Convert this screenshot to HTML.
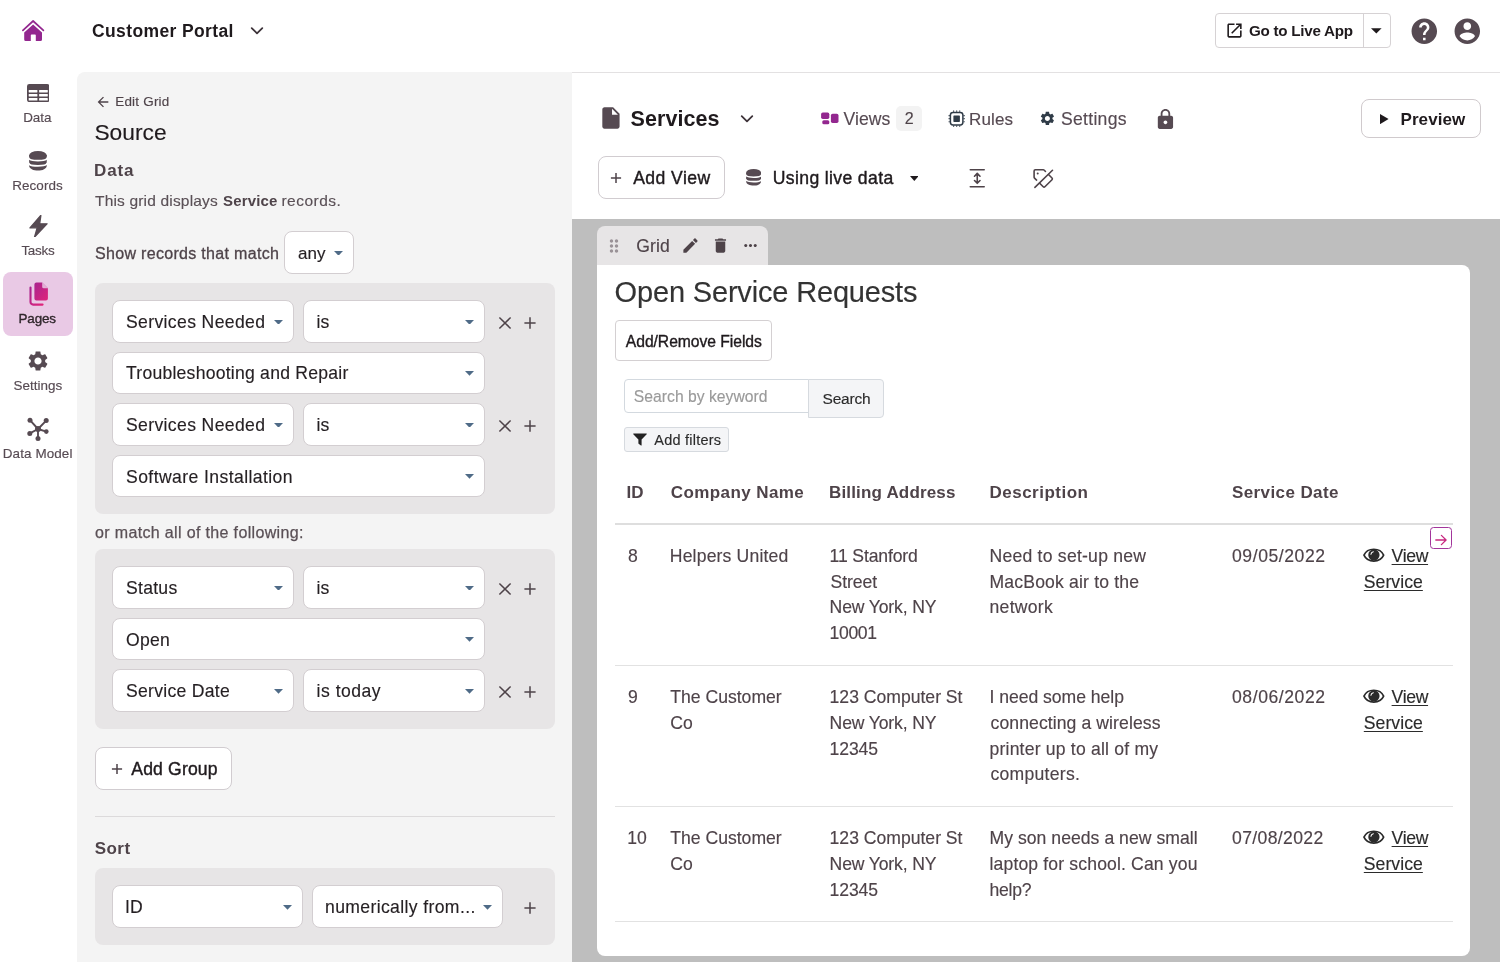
<!DOCTYPE html>
<html lang="en"><head><meta charset="utf-8"><title>Customer Portal - Services</title>
<style>
html,body{margin:0;padding:0}
body{width:1500px;height:962px;overflow:hidden;background:#fff;position:relative;font-family:"Liberation Sans", sans-serif;}
.b{position:absolute;box-sizing:border-box;display:block}
.t{position:absolute;white-space:pre;margin:0;padding:0}
#tx{position:absolute;left:0;top:0;width:1500px;height:962px;will-change:transform}
</style></head><body>
<div class="b" style="left:77px;top:72px;width:495px;height:890px;background:#f4f4f4;border-radius:8px 0 0 0;"></div>
<div class="b" style="left:572px;top:72px;width:928px;height:147px;background:#fff;border-top:1px solid #e3e1e2;"></div>
<div class="b" style="left:572px;top:218.5px;width:928px;height:743.5px;background:#bebebe;"></div>
<div class="b" style="left:596.6px;top:226.3px;width:171.8px;height:40px;background:#e7e5e6;border-radius:8px 8px 0 0;"></div>
<div class="b" style="left:597px;top:265px;width:872.6px;height:690.6px;background:#fff;border-radius:0 8px 8px 8px;"></div>
<div class="b" style="left:3px;top:272px;width:70px;height:63.6px;background:#e9c9e5;border-radius:8px;"></div>
<svg class="b" style="left:21px;top:19px;" width="24" height="24" viewBox="0 0 24 24"><path d="M1.900 11.400 L12.100 2 L22.400 11.400" fill="none" stroke="#93278f" stroke-width="1.700" stroke-linecap="round" stroke-linejoin="round"/><path d="M12.100 5.500 L21 13.500 V20.400 a1.500 1.500 0 0 1 -1.500 1.500 H14.800 V16.200 a0.800 0.800 0 0 0 -0.800 -0.800 H10.600 a0.800 0.800 0 0 0 -0.800 0.800 V21.900 H4.700 a1.500 1.500 0 0 1 -1.500 -1.500 V13.500 Z" fill="#93278f"/></svg>
<svg class="b" style="left:248.5px;top:23px;" width="16" height="16" viewBox="0 0 16 16"><path d="M2.700 5.100 L8 10.300 L13.300 5.100" fill="none" stroke="#3d3339" stroke-width="1.800" stroke-linecap="round" stroke-linejoin="round"/></svg>
<div class="b" style="left:1215px;top:13.3px;width:175.7px;height:34.4px;background:#fff;border:1px solid #d6d2d4;border-radius:4px;"></div>
<div class="b" style="left:1363px;top:14px;width:1px;height:33px;background:#d6d2d4;"></div>
<svg class="b" style="left:1225px;top:21px;" width="19" height="19" viewBox="0 0 24 24"><path fill="#1f1a1d" d="M19 19H5V5h7V3H5c-1.11 0-2 .9-2 2v14c0 1.1.89 2 2 2h14c1.1 0 2-.9 2-2v-7h-2v7zM14 3v2h3.59l-9.83 9.83 1.41 1.41L19 6.41V10h2V3h-7z"/></svg>
<svg class="b" style="left:1371px;top:28px;" width="10.6" height="5.6" viewBox="0 0 10 5"><path d="M0 0h10L5 5z" fill="#1f1a1d"/></svg>
<svg class="b" style="left:1408.5px;top:15.5px;" width="30.6" height="30.6" viewBox="0 0 24 24"><path fill="#564a52" d="M12 2C6.48 2 2 6.48 2 12s4.48 10 10 10 10-4.48 10-10S17.52 2 12 2zm1 17h-2v-2h2v2zm2.07-7.75l-.9.92C13.45 12.9 13 13.5 13 15h-2v-.5c0-1.1.45-2.1 1.17-2.83l1.24-1.26c.37-.36.59-.86.59-1.41 0-1.1-.9-2-2-2s-2 .9-2 2H8c0-2.21 1.79-4 4-4s4 1.79 4 4c0 .88-.36 1.68-.93 2.25z"/></svg>
<svg class="b" style="left:1451.9px;top:15.5px;" width="30.6" height="30.6" viewBox="0 0 24 24"><path fill="#564a52" d="M12 2C6.48 2 2 6.48 2 12s4.48 10 10 10 10-4.48 10-10S17.52 2 12 2zm0 3c1.66 0 3 1.34 3 3s-1.34 3-3 3-3-1.34-3-3 1.34-3 3-3zm0 14.2c-2.5 0-4.71-1.28-6-3.22.03-1.99 4-3.08 6-3.08 1.99 0 5.97 1.09 6 3.08-1.29 1.94-3.5 3.22-6 3.22z"/></svg>
<svg class="b" style="left:26.8px;top:84.1px;" width="22.5" height="18.1" viewBox="0 0 22.5 18.1"><rect x="0" y="0" width="22.5" height="18.1" rx="2.3" fill="#564a52"/><rect x="1.7" y="5.9" width="8.7" height="2.6" rx="0.4" fill="#fff"/><rect x="1.7" y="9.9" width="8.7" height="2.6" rx="0.4" fill="#fff"/><rect x="1.7" y="14.0" width="8.7" height="2.6" rx="0.4" fill="#fff"/><rect x="12.1" y="5.9" width="8.7" height="2.6" rx="0.4" fill="#fff"/><rect x="12.1" y="9.9" width="8.7" height="2.6" rx="0.4" fill="#fff"/><rect x="12.1" y="14.0" width="8.7" height="2.6" rx="0.4" fill="#fff"/></svg>
<svg class="b" style="left:29.1px;top:150.8px;" width="17.9" height="19.8" viewBox="0 0 18 20"><path d="M0.100 4.400 V14.600 C0.100 21.500 17.900 21.500 17.900 14.600 V4.400 Z" fill="#564a52"/><ellipse cx="9" cy="4.400" rx="8.900" ry="4.350" fill="#564a52"/><path d="M-0.500 6.600 C-0.500 10.800 18.500 10.800 18.500 6.600" fill="none" stroke="#fff" stroke-width="1.700"/><path d="M-0.500 11.800 C-0.500 16.100 18.500 16.100 18.500 11.800" fill="none" stroke="#fff" stroke-width="1.900"/></svg>
<svg class="b" style="left:28.5px;top:214.5px;" width="19" height="22.5" viewBox="0 0 19 22"><path d="M11.8 0.3 L1 12.6 H8.2 L5.6 21.7 L18 8.6 H10.6 Z" fill="#564a52" stroke="#564a52" stroke-width="1.400" stroke-linejoin="round"/></svg>
<svg class="b" style="left:28.5px;top:281.5px;" width="19.5" height="24" viewBox="0 0 19.5 24"><defs><linearGradient id="pg" x1="0" y1="0" x2="1" y2="1"><stop offset="0" stop-color="#a8248f"/><stop offset="1" stop-color="#e0257b"/></linearGradient></defs><path d="M7.4 0.6 H13.2 L18.9 6.3 V16.6 a2 2 0 0 1 -2 2 H7.4 a2 2 0 0 1 -2 -2 V2.6 a2 2 0 0 1 2 -2 Z" fill="url(#pg)"/><path d="M13.2 0.6 V4.8 a1.5 1.5 0 0 0 1.5 1.5 H18.9 Z" fill="#e9c9e5" opacity="0.85"/><path d="M1.5 5.6 V20 a2.6 2.6 0 0 0 2.6 2.6 H13.6" fill="none" stroke="url(#pg)" stroke-width="2.1" stroke-linecap="round"/></svg>
<svg class="b" style="left:26px;top:349.2px;" width="24" height="24" viewBox="0 0 24 24"><path fill="#564a52" d="M19.14 12.94c.04-.3.06-.61.06-.94 0-.32-.02-.64-.07-.94l2.03-1.58c.18-.14.23-.41.12-.61l-1.92-3.32c-.12-.22-.37-.29-.59-.22l-2.39.96c-.5-.38-1.03-.7-1.62-.94l-.36-2.54c-.04-.24-.24-.41-.48-.41h-3.84c-.24 0-.43.17-.47.41l-.36 2.54c-.59.24-1.13.57-1.62.94l-2.39-.96c-.22-.08-.47 0-.59.22L2.74 8.87c-.12.21-.08.47.12.61l2.03 1.58c-.05.3-.09.63-.09.94s.02.64.07.94l-2.03 1.58c-.18.14-.23.41-.12.61l1.92 3.32c.12.22.37.29.59.22l2.39-.96c.5.38 1.03.7 1.62.94l.36 2.54c.05.24.24.41.48.41h3.84c.24 0 .44-.17.47-.41l.36-2.54c.59-.24 1.13-.56 1.62-.94l2.39.96c.22.08.47 0 .59-.22l1.92-3.32c.12-.22.07-.47-.12-.61l-2.01-1.58zM12 15.6c-1.98 0-3.6-1.62-3.6-3.6s1.62-3.6 3.6-3.6 3.6 1.62 3.6 3.6-1.62 3.6-3.6 3.6z"/></svg>
<svg class="b" style="left:26.5px;top:417px;" width="22" height="24.5" viewBox="0 0 22 24.5"><g stroke="#564a52" stroke-width="1.9" stroke-linecap="round"><path d="M11 12 L3 3.2 M11 12 L19.2 3.6 M11 12 L2.8 16.4 M11 12 L19.3 14.6 M11 12 V21.6"/></g><g fill="#564a52"><circle cx="11" cy="12" r="3"/><circle cx="3" cy="3.2" r="2.5"/><circle cx="19.2" cy="3.6" r="2.5"/><circle cx="2.8" cy="16.4" r="2.5"/><circle cx="19.3" cy="14.6" r="2.3"/><circle cx="11" cy="21.6" r="2.5"/></g></svg>
<svg class="b" style="left:94.6px;top:94px;" width="16" height="16" viewBox="0 0 24 24"><path fill="#4e4349" d="M20 11H7.83l5.59-5.59L12 4l-8 8 8 8 1.41-1.41L7.83 13H20v-2z"/></svg>
<div class="b" style="left:283.6px;top:231.1px;width:70.6px;height:42.9px;background:#fff;border:1px solid #d3ced1;border-radius:8px;"></div>
<svg class="b" style="left:333.6px;top:250.74999999999997px;" width="9" height="4.7" viewBox="0 0 9 4.7"><path d="M0 0 H9 L4.5 4.7 Z" fill="#4f6b87"/></svg>
<div class="b" style="left:95px;top:283px;width:460px;height:231px;background:#e7e5e6;border-radius:8px;"></div>
<div class="b" style="left:111.9px;top:300.0px;width:182.4px;height:42.7px;background:#fff;border:1px solid #d3ced1;border-radius:8px;"></div>
<svg class="b" style="left:273.7px;top:319.55px;" width="9" height="4.7" viewBox="0 0 9 4.7"><path d="M0 0 H9 L4.5 4.7 Z" fill="#4f6b87"/></svg>
<div class="b" style="left:302.7px;top:300.0px;width:182.5px;height:42.7px;background:#fff;border:1px solid #d3ced1;border-radius:8px;"></div>
<svg class="b" style="left:464.59999999999997px;top:319.55px;" width="9" height="4.7" viewBox="0 0 9 4.7"><path d="M0 0 H9 L4.5 4.7 Z" fill="#4f6b87"/></svg>
<svg class="b" style="left:497.5px;top:315.8px;" width="14" height="14" viewBox="0 0 14 14"><path d="M1.400 1.500 L12.600 12.500 M12.600 1.500 L1.400 12.500" stroke="#4e4349" stroke-width="1.5" fill="none"/></svg>
<svg class="b" style="left:523.2px;top:315.8px;" width="14" height="14" viewBox="0 0 14 14"><path d="M7 1.300 V12.700 M1.400 7 H12.600" stroke="#4e4349" stroke-width="1.5" fill="none"/></svg>
<div class="b" style="left:111.9px;top:351.6px;width:373.3px;height:42.7px;background:#fff;border:1px solid #d3ced1;border-radius:8px;"></div>
<svg class="b" style="left:464.6px;top:371.15000000000003px;" width="9" height="4.7" viewBox="0 0 9 4.7"><path d="M0 0 H9 L4.5 4.7 Z" fill="#4f6b87"/></svg>
<div class="b" style="left:111.9px;top:403.2px;width:182.4px;height:42.7px;background:#fff;border:1px solid #d3ced1;border-radius:8px;"></div>
<svg class="b" style="left:273.7px;top:422.75px;" width="9" height="4.7" viewBox="0 0 9 4.7"><path d="M0 0 H9 L4.5 4.7 Z" fill="#4f6b87"/></svg>
<div class="b" style="left:302.7px;top:403.2px;width:182.5px;height:42.7px;background:#fff;border:1px solid #d3ced1;border-radius:8px;"></div>
<svg class="b" style="left:464.59999999999997px;top:422.75px;" width="9" height="4.7" viewBox="0 0 9 4.7"><path d="M0 0 H9 L4.5 4.7 Z" fill="#4f6b87"/></svg>
<svg class="b" style="left:497.5px;top:419.0px;" width="14" height="14" viewBox="0 0 14 14"><path d="M1.400 1.500 L12.600 12.500 M12.600 1.500 L1.400 12.500" stroke="#4e4349" stroke-width="1.5" fill="none"/></svg>
<svg class="b" style="left:523.2px;top:419.0px;" width="14" height="14" viewBox="0 0 14 14"><path d="M7 1.300 V12.700 M1.400 7 H12.600" stroke="#4e4349" stroke-width="1.5" fill="none"/></svg>
<div class="b" style="left:111.9px;top:454.8px;width:373.3px;height:42.7px;background:#fff;border:1px solid #d3ced1;border-radius:8px;"></div>
<svg class="b" style="left:464.6px;top:474.35px;" width="9" height="4.7" viewBox="0 0 9 4.7"><path d="M0 0 H9 L4.5 4.7 Z" fill="#4f6b87"/></svg>
<div class="b" style="left:95px;top:549.3px;width:460px;height:180px;background:#e7e5e6;border-radius:8px;"></div>
<div class="b" style="left:111.9px;top:566.2px;width:182.4px;height:42.7px;background:#fff;border:1px solid #d3ced1;border-radius:8px;"></div>
<svg class="b" style="left:273.7px;top:585.7500000000001px;" width="9" height="4.7" viewBox="0 0 9 4.7"><path d="M0 0 H9 L4.5 4.7 Z" fill="#4f6b87"/></svg>
<div class="b" style="left:302.7px;top:566.2px;width:182.5px;height:42.7px;background:#fff;border:1px solid #d3ced1;border-radius:8px;"></div>
<svg class="b" style="left:464.59999999999997px;top:585.7500000000001px;" width="9" height="4.7" viewBox="0 0 9 4.7"><path d="M0 0 H9 L4.5 4.7 Z" fill="#4f6b87"/></svg>
<svg class="b" style="left:497.5px;top:582.0px;" width="14" height="14" viewBox="0 0 14 14"><path d="M1.400 1.500 L12.600 12.500 M12.600 1.500 L1.400 12.500" stroke="#4e4349" stroke-width="1.5" fill="none"/></svg>
<svg class="b" style="left:523.2px;top:582.0px;" width="14" height="14" viewBox="0 0 14 14"><path d="M7 1.300 V12.700 M1.400 7 H12.600" stroke="#4e4349" stroke-width="1.5" fill="none"/></svg>
<div class="b" style="left:111.9px;top:617.8px;width:373.3px;height:42.7px;background:#fff;border:1px solid #d3ced1;border-radius:8px;"></div>
<svg class="b" style="left:464.6px;top:637.35px;" width="9" height="4.7" viewBox="0 0 9 4.7"><path d="M0 0 H9 L4.5 4.7 Z" fill="#4f6b87"/></svg>
<div class="b" style="left:111.9px;top:669.4px;width:182.4px;height:42.7px;background:#fff;border:1px solid #d3ced1;border-radius:8px;"></div>
<svg class="b" style="left:273.7px;top:688.95px;" width="9" height="4.7" viewBox="0 0 9 4.7"><path d="M0 0 H9 L4.5 4.7 Z" fill="#4f6b87"/></svg>
<div class="b" style="left:302.7px;top:669.4px;width:182.5px;height:42.7px;background:#fff;border:1px solid #d3ced1;border-radius:8px;"></div>
<svg class="b" style="left:464.59999999999997px;top:688.95px;" width="9" height="4.7" viewBox="0 0 9 4.7"><path d="M0 0 H9 L4.5 4.7 Z" fill="#4f6b87"/></svg>
<svg class="b" style="left:497.5px;top:685.1999999999999px;" width="14" height="14" viewBox="0 0 14 14"><path d="M1.400 1.500 L12.600 12.500 M12.600 1.500 L1.400 12.500" stroke="#4e4349" stroke-width="1.5" fill="none"/></svg>
<svg class="b" style="left:523.2px;top:685.1999999999999px;" width="14" height="14" viewBox="0 0 14 14"><path d="M7 1.300 V12.700 M1.400 7 H12.600" stroke="#4e4349" stroke-width="1.5" fill="none"/></svg>
<div class="b" style="left:94.5px;top:747.4px;width:137.8px;height:42.6px;background:#fff;border:1px solid #d1ccd0;border-radius:8px;"></div>
<svg class="b" style="left:111.2px;top:762.8px;" width="12" height="12" viewBox="0 0 12 12"><path d="M6 0.900 V11.100 M0.900 6 H11.100" stroke="#4e4349" stroke-width="1.500" fill="none"/></svg>
<div class="b" style="left:94.6px;top:816.3px;width:460.4px;height:1px;background:#dcdadb;"></div>
<div class="b" style="left:95px;top:868.3px;width:460px;height:76.7px;background:#e7e5e6;border-radius:8px;"></div>
<div class="b" style="left:111.9px;top:885.3px;width:191.3px;height:42.7px;background:#fff;border:1px solid #d3ced1;border-radius:8px;"></div>
<svg class="b" style="left:282.6px;top:904.85px;" width="9" height="4.7" viewBox="0 0 9 4.7"><path d="M0 0 H9 L4.5 4.7 Z" fill="#4f6b87"/></svg>
<div class="b" style="left:311.9px;top:885.3px;width:191.3px;height:42.7px;background:#fff;border:1px solid #d3ced1;border-radius:8px;"></div>
<svg class="b" style="left:482.59999999999997px;top:904.85px;" width="9" height="4.7" viewBox="0 0 9 4.7"><path d="M0 0 H9 L4.5 4.7 Z" fill="#4f6b87"/></svg>
<svg class="b" style="left:523.2px;top:901.0999999999999px;" width="14" height="14" viewBox="0 0 14 14"><path d="M7 1.300 V12.700 M1.400 7 H12.600" stroke="#4e4349" stroke-width="1.5" fill="none"/></svg>
<svg class="b" style="left:597.7px;top:105.2px;" width="25.9" height="25.9" viewBox="0 0 24 24"><path fill="#564a52" d="M6 2c-1.1 0-1.99.9-1.99 2L4 20c0 1.1.89 2 1.99 2H18c1.1 0 2-.9 2-2V8l-6-6H6zm7 7V3.5L18.5 9H13z"/></svg>
<svg class="b" style="left:738.5px;top:110.5px;" width="16" height="16" viewBox="0 0 16 16"><path d="M2.700 5.100 L8 10.300 L13.300 5.100" fill="none" stroke="#3d3339" stroke-width="1.800" stroke-linecap="round" stroke-linejoin="round"/></svg>
<svg class="b" style="left:821px;top:112px;" width="18" height="13" viewBox="0 0 18 13"><g fill="#93278f"><rect x="0.100" y="0.600" width="8.200" height="6.300" rx="1.700"/><rect x="1.300" y="8.200" width="7" height="4.100" rx="1.500"/><rect x="9.900" y="1.800" width="7.600" height="9.200" rx="1.700"/></g></svg>
<div class="b" style="left:896px;top:105.6px;width:25.6px;height:25.2px;background:#f3f3f3;border-radius:5px;"></div>
<svg class="b" style="left:947.6px;top:109.7px;" width="17.3" height="17.3" viewBox="0 0 17.3 17.3"><rect x="2.400" y="2.400" width="12.500" height="12.500" rx="2.600" fill="none" stroke="#2f3b47" stroke-width="1.500"/><rect x="5.400" y="5.400" width="6.500" height="6.500" rx="0.700" fill="#2f3b47"/><g stroke="#2f3b47" stroke-width="1.100"><path d="M5.600 0.600V1.800 M8.650 0.600V1.800 M11.700 0.600V1.800 M5.600 15.500V16.700 M8.650 15.500V16.700 M11.700 15.500V16.700 M0.600 5.600H1.800 M0.600 8.650H1.800 M0.600 11.700H1.800 M15.500 5.600H16.700 M15.500 8.650H16.700 M15.500 11.700H16.700"/></g></svg>
<svg class="b" style="left:1038.6px;top:110.4px;" width="16.8" height="16.8" viewBox="0 0 24 24"><path fill="#2f3b47" d="M19.14 12.94c.04-.3.06-.61.06-.94 0-.32-.02-.64-.07-.94l2.03-1.58c.18-.14.23-.41.12-.61l-1.92-3.32c-.12-.22-.37-.29-.59-.22l-2.39.96c-.5-.38-1.03-.7-1.62-.94l-.36-2.54c-.04-.24-.24-.41-.48-.41h-3.84c-.24 0-.43.17-.47.41l-.36 2.54c-.59.24-1.13.57-1.62.94l-2.39-.96c-.22-.08-.47 0-.59.22L2.74 8.87c-.12.21-.08.47.12.61l2.03 1.58c-.05.3-.09.63-.09.94s.02.64.07.94l-2.03 1.58c-.18.14-.23.41-.12.61l1.92 3.32c.12.22.37.29.59.22l2.39-.96c.5.38 1.03.7 1.62.94l.36 2.54c.05.24.24.41.48.41h3.84c.24 0 .44-.17.47-.41l.36-2.54c.59-.24 1.13-.56 1.62-.94l2.39.96c.22.08.47 0 .59-.22l1.92-3.32c.12-.22.07-.47-.12-.61l-2.01-1.58zM12 15.6c-1.98 0-3.6-1.62-3.6-3.6s1.62-3.6 3.6-3.6 3.6 1.62 3.6 3.6-1.62 3.6-3.6 3.6z"/></svg>
<svg class="b" style="left:1154px;top:107.7px;" width="22.9" height="22.9" viewBox="0 0 24 24"><path fill="#564a52" d="M18 8h-1V6c0-2.76-2.24-5-5-5S7 3.240 7 6v2H6c-1.1 0-2 .9-2 2v10c0 1.1.9 2 2 2h12c1.100 0 2-.9 2-2V10c0-1.1-.9-2-2-2zm-6 9c-1.1 0-2-.9-2-2s.9-2 2-2 2 .9 2 2-.9 2-2 2zm3.100-9H8.900V6c0-1.710 1.390-3.100 3.100-3.100 1.710 0 3.100 1.390 3.100 3.100v2z"/></svg>
<div class="b" style="left:1360.8px;top:98.8px;width:120px;height:38.9px;background:#fff;border:1px solid #d0cacd;border-radius:8px;"></div>
<svg class="b" style="left:1380px;top:113.5px;" width="8.6" height="10.2" viewBox="0 0 8.6 10.2"><path d="M0 0 V10.2 L8.6 5.1 Z" fill="#1f1a1d"/></svg>
<div class="b" style="left:598px;top:156.2px;width:127px;height:43px;background:#fff;border:1px solid #d1ccd0;border-radius:8px;"></div>
<svg class="b" style="left:609.6px;top:171.8px;" width="12" height="12" viewBox="0 0 12 12"><path d="M6 0.900 V11.100 M0.900 6 H11.100" stroke="#4e4349" stroke-width="1.500" fill="none"/></svg>
<svg class="b" style="left:746px;top:169.4px;" width="15.2" height="16.8" viewBox="0 0 18 20"><path d="M0.100 4.400 V14.600 C0.100 21.500 17.900 21.500 17.900 14.600 V4.400 Z" fill="#564a52"/><ellipse cx="9" cy="4.400" rx="8.900" ry="4.350" fill="#564a52"/><path d="M-0.500 6.600 C-0.500 10.800 18.500 10.800 18.500 6.600" fill="none" stroke="#fff" stroke-width="1.700"/><path d="M-0.500 11.800 C-0.500 16.100 18.500 16.100 18.500 11.800" fill="none" stroke="#fff" stroke-width="1.900"/></svg>
<svg class="b" style="left:909.8px;top:175.8px;" width="8.6" height="5" viewBox="0 0 8.6 5"><path d="M0 0H8.6L4.3 5z" fill="#1f1a1d"/></svg>
<svg class="b" style="left:968px;top:167.5px;" width="18" height="20" viewBox="0 0 18 20"><g stroke="#4e4349" stroke-width="1.600" fill="none" stroke-linecap="round" stroke-linejoin="round"><path d="M2.300 1.800H16.200 M2.300 18.700H16.200 M9.250 5.800V14.900 M6.500 8.200L9.250 5.400L12 8.200 M6.500 12.500L9.250 15.300L12 12.500"/></g></svg>
<svg class="b" style="left:1031.5px;top:167.5px;" width="22" height="21" viewBox="0 0 22 21"><path d="M3.300 1.800 H11.200 a1.500 1.500 0 0 1 1.060 0.440 L20 10 a1.200 1.200 0 0 1 0 1.700 L12.900 18.800 a1.200 1.200 0 0 1 -1.700 0 L2.540 10.100 a1.500 1.500 0 0 1 -0.440 -1.060 V3 a1.200 1.200 0 0 1 1.200 -1.200 Z" fill="none" stroke="#4e4349" stroke-width="1.600" stroke-linejoin="round"/><circle cx="5.700" cy="5.500" r="1" fill="#4e4349"/><path d="M20.400 -0.400 L0.800 18.700" stroke="#fff" stroke-width="3"/><path d="M20.500 2.300 L2.900 19.400" stroke="#4e4349" stroke-width="1.600" stroke-linecap="round"/></svg>
<svg class="b" style="left:603.5px;top:235.5px;" width="20" height="20" viewBox="0 0 24 24"><path fill="#9a9297" d="M11 18c0 1.1-.9 2-2 2s-2-.9-2-2 .9-2 2-2 2 .9 2 2zm-2-8c-1.1 0-2 .9-2 2s.9 2 2 2 2-.9 2-2-.9-2-2-2zm0-6c-1.1 0-2 .9-2 2s.9 2 2 2 2-.9 2-2-.9-2-2-2zm6 4c1.1 0 2-.9 2-2s-.9-2-2-2-2 .9-2 2 .9 2 2 2zm0 2c-1.1 0-2 .9-2 2s.9 2 2 2 2-.9 2-2-.9-2-2-2zm0 6c-1.1 0-2 .9-2 2s.9 2 2 2 2-.9 2-2-.9-2-2-2z"/></svg>
<svg class="b" style="left:681.2px;top:236.2px;" width="19" height="19" viewBox="0 0 24 24"><path fill="#4e4349" d="M3 17.25V21h3.750L17.810 9.940l-3.750-3.750L3 17.250zM20.710 7.040c.39-.39.39-1.020 0-1.410l-2.340-2.340c-.39-.39-1.020-.39-1.410 0l-1.830 1.830 3.750 3.750 1.830-1.830z"/></svg>
<svg class="b" style="left:711.4px;top:236px;" width="19" height="19" viewBox="0 0 24 24"><path fill="#4e4349" d="M6 19c0 1.100.9 2 2 2h8c1.100 0 2-.9 2-2V7H6v12zM19 4h-3.500l-1-1h-5l-1 1H5v2h14V4z"/></svg>
<svg class="b" style="left:741.4px;top:236px;" width="19" height="19" viewBox="0 0 24 24"><path fill="#4e4349" d="M6 10c-1.100 0-2 .9-2 2s.9 2 2 2 2-.9 2-2-.9-2-2-2zm12 0c-1.100 0-2 .9-2 2s.9 2 2 2 2-.9 2-2-.9-2-2-2zm-6 0c-1.100 0-2 .9-2 2s.9 2 2 2 2-.9 2-2-.9-2-2-2z"/></svg>
<div class="b" style="left:615px;top:320.3px;width:157px;height:40.7px;background:#fff;border:1px solid #d4d0d2;border-radius:4px;"></div>
<div class="b" style="left:624px;top:379px;width:185.3px;height:33.6px;background:#fff;border:1px solid #d3d9df;border-radius:4px 0 0 4px;"></div>
<div class="b" style="left:808.3px;top:379px;width:75.5px;height:38.6px;background:#f4f5f7;border:1px solid #d6dadf;border-radius:0 4px 4px 0;"></div>
<div class="b" style="left:624px;top:427px;width:104.6px;height:24.7px;background:#f4f5f7;border:1px solid #d6dadf;border-radius:3px;"></div>
<svg class="b" style="left:633px;top:433px;" width="14" height="13" viewBox="0 0 14 13"><path d="M0.700 0.400 H13.300 a0.500 0.500 0 0 1 0.400 0.850 L8.600 6.600 V12.200 a0.400 0.400 0 0 1 -0.650 0.300 L5.600 10.700 a0.600 0.600 0 0 1 -0.200 -0.450 V6.600 L0.300 1.250 a0.500 0.500 0 0 1 0.400 -0.850 Z" fill="#222"/></svg>
<div class="b" style="left:615px;top:523px;width:838px;height:2px;background:#dedede;"></div>
<div class="b" style="left:615px;top:664.5px;width:838px;height:1px;background:#e2e2e2;"></div>
<div class="b" style="left:615px;top:805.5px;width:838px;height:1px;background:#e2e2e2;"></div>
<div class="b" style="left:615px;top:921px;width:838px;height:1px;background:#e2e2e2;"></div>
<svg class="b" style="left:1363.2px;top:548px;" width="21.6" height="14.4" viewBox="0 0 21.6 14.4"><path d="M0.950 7.200 C4.500 -0.700 17.100 -0.700 20.650 7.200 C17.100 15.100 4.500 15.100 0.950 7.200 Z" fill="none" stroke="#2b2b2b" stroke-width="1.700" stroke-linejoin="round"/><circle cx="10.900" cy="6.900" r="5.650" fill="#2b2b2b"/><path d="M7.900 6.300 A3.200 3.200 0 0 1 10.300 3.700" fill="none" stroke="#fff" stroke-width="1.050" stroke-linecap="round"/></svg>
<svg class="b" style="left:1363.2px;top:689.2px;" width="21.6" height="14.4" viewBox="0 0 21.6 14.4"><path d="M0.950 7.200 C4.500 -0.700 17.100 -0.700 20.650 7.200 C17.100 15.100 4.500 15.100 0.950 7.200 Z" fill="none" stroke="#2b2b2b" stroke-width="1.700" stroke-linejoin="round"/><circle cx="10.900" cy="6.900" r="5.650" fill="#2b2b2b"/><path d="M7.900 6.300 A3.200 3.200 0 0 1 10.300 3.700" fill="none" stroke="#fff" stroke-width="1.050" stroke-linecap="round"/></svg>
<svg class="b" style="left:1363.2px;top:830.2px;" width="21.6" height="14.4" viewBox="0 0 21.6 14.4"><path d="M0.950 7.200 C4.500 -0.700 17.100 -0.700 20.650 7.200 C17.100 15.100 4.500 15.100 0.950 7.200 Z" fill="none" stroke="#2b2b2b" stroke-width="1.700" stroke-linejoin="round"/><circle cx="10.900" cy="6.900" r="5.650" fill="#2b2b2b"/><path d="M7.900 6.300 A3.200 3.200 0 0 1 10.300 3.700" fill="none" stroke="#fff" stroke-width="1.050" stroke-linecap="round"/></svg>
<div class="b" style="left:1430.3px;top:527px;width:21.9px;height:21.6px;background:#fff;border:1px solid #a2359b;border-radius:3.5px;"></div>
<svg class="b" style="left:1434.3px;top:532.7px;" width="14" height="14" viewBox="0 0 14 14"><path d="M1.800 7 H11.800 M7.400 2.400 L12.100 7 L7.400 11.600" fill="none" stroke="#c7277f" stroke-width="1.300" stroke-linecap="round" stroke-linejoin="round"/></svg>
<div id="tx">
<div class="t" id="t0" style="left:92.00px;top:21.00px;font-size:17.5px;line-height:21px;font-weight:700;color:#1f1a1d;letter-spacing:0.373px;">Customer Portal</div>
<div class="t" id="t1" style="left:1249.00px;top:22.30px;font-size:15.2px;line-height:18px;font-weight:700;color:#1f1a1d;letter-spacing:-0.255px;">Go to Live App</div>
<div class="t" id="t2" style="left:23.20px;top:110.00px;font-size:13.45px;line-height:16px;font-weight:400;color:#564a52;letter-spacing:-0.037px;-webkit-text-stroke:0.15px #564a52;">Data</div>
<div class="t" id="t3" style="left:12.20px;top:178.00px;font-size:13.45px;line-height:16px;font-weight:400;color:#564a52;letter-spacing:0.080px;-webkit-text-stroke:0.15px #564a52;">Records</div>
<div class="t" id="t4" style="left:21.40px;top:243.00px;font-size:13.45px;line-height:16px;font-weight:400;color:#564a52;letter-spacing:-0.257px;-webkit-text-stroke:0.15px #564a52;">Tasks</div>
<div class="t" id="t5" style="left:18.60px;top:311.00px;font-size:13.45px;line-height:16px;font-weight:400;color:#2f262b;letter-spacing:-0.196px;-webkit-text-stroke:0.35px #2f262b;">Pages</div>
<div class="t" id="t6" style="left:13.40px;top:378.00px;font-size:13.45px;line-height:16px;font-weight:400;color:#564a52;letter-spacing:0.052px;-webkit-text-stroke:0.15px #564a52;">Settings</div>
<div class="t" id="t7" style="left:2.80px;top:446.00px;font-size:13.45px;line-height:16px;font-weight:400;color:#564a52;letter-spacing:0.097px;-webkit-text-stroke:0.15px #564a52;">Data Model</div>
<div class="t" id="t8" style="left:115.20px;top:94.00px;font-size:13.45px;line-height:16px;font-weight:400;color:#4e4349;letter-spacing:0.225px;-webkit-text-stroke:0.15px #4e4349;">Edit Grid</div>
<div class="t" id="t9" style="left:94.40px;top:119.00px;font-size:22.77px;line-height:27px;font-weight:400;color:#1f1a1d;letter-spacing:0.026px;-webkit-text-stroke:0.15px #1f1a1d;">Source</div>
<div class="t" id="t10" style="left:94.00px;top:161.00px;font-size:17px;line-height:20px;font-weight:700;color:#4e4349;letter-spacing:0.869px;">Data</div>
<div class="t" id="t11" style="left:95.00px;top:191.00px;font-size:15.52px;line-height:19px;font-weight:400;color:#5a5056;letter-spacing:0.170px;-webkit-text-stroke:0.15px #5a5056;">This grid displays</div>
<div class="t" id="t12" style="left:223.00px;top:192.00px;font-size:15px;line-height:18px;font-weight:700;color:#4e4349;letter-spacing:0.161px;">Service</div>
<div class="t" id="t13" style="left:281.40px;top:191.00px;font-size:15.52px;line-height:19px;font-weight:400;color:#5a5056;letter-spacing:0.495px;-webkit-text-stroke:0.15px #5a5056;">records.</div>
<div class="t" id="t14" style="left:95.00px;top:244.00px;font-size:16.04px;line-height:19px;font-weight:400;color:#4e4349;letter-spacing:0.300px;-webkit-text-stroke:0.3px #4e4349;">Show records that match</div>
<div class="t" id="t15" style="left:297.90px;top:244.00px;font-size:17px;line-height:20px;font-weight:400;color:#241f22;letter-spacing:0.045px;-webkit-text-stroke:0.15px #241f22;">any</div>
<div class="t" id="t16" style="left:126.00px;top:311.70px;font-size:17.59px;line-height:21px;font-weight:400;color:#241f22;letter-spacing:0.365px;-webkit-text-stroke:0.15px #241f22;">Services Needed</div>
<div class="t" id="t17" style="left:316.60px;top:311.70px;font-size:17.59px;line-height:21px;font-weight:400;color:#241f22;-webkit-text-stroke:0.15px #241f22;">is</div>
<div class="t" id="t18" style="left:126.00px;top:363.30px;font-size:17.59px;line-height:21px;font-weight:400;color:#241f22;letter-spacing:0.239px;-webkit-text-stroke:0.15px #241f22;">Troubleshooting and Repair</div>
<div class="t" id="t19" style="left:126.00px;top:414.90px;font-size:17.59px;line-height:21px;font-weight:400;color:#241f22;letter-spacing:0.365px;-webkit-text-stroke:0.15px #241f22;">Services Needed</div>
<div class="t" id="t20" style="left:316.60px;top:414.90px;font-size:17.59px;line-height:21px;font-weight:400;color:#241f22;-webkit-text-stroke:0.15px #241f22;">is</div>
<div class="t" id="t21" style="left:126.00px;top:466.50px;font-size:17.59px;line-height:21px;font-weight:400;color:#241f22;letter-spacing:0.414px;-webkit-text-stroke:0.15px #241f22;">Software Installation</div>
<div class="t" id="t22" style="left:95.00px;top:523.30px;font-size:16px;line-height:19px;font-weight:400;color:#5a5056;letter-spacing:0.349px;-webkit-text-stroke:0.25px #5a5056;">or match all of the following:</div>
<div class="t" id="t23" style="left:126.00px;top:577.90px;font-size:17.59px;line-height:21px;font-weight:400;color:#241f22;letter-spacing:0.271px;-webkit-text-stroke:0.15px #241f22;">Status</div>
<div class="t" id="t24" style="left:316.60px;top:577.90px;font-size:17.59px;line-height:21px;font-weight:400;color:#241f22;-webkit-text-stroke:0.15px #241f22;">is</div>
<div class="t" id="t25" style="left:126.00px;top:629.50px;font-size:17.59px;line-height:21px;font-weight:400;color:#241f22;letter-spacing:0.258px;-webkit-text-stroke:0.15px #241f22;">Open</div>
<div class="t" id="t26" style="left:126.00px;top:681.10px;font-size:17.59px;line-height:21px;font-weight:400;color:#241f22;letter-spacing:0.286px;-webkit-text-stroke:0.15px #241f22;">Service Date</div>
<div class="t" id="t27" style="left:316.60px;top:681.10px;font-size:17.59px;line-height:21px;font-weight:400;color:#241f22;letter-spacing:0.487px;-webkit-text-stroke:0.15px #241f22;">is today</div>
<div class="t" id="t28" style="left:131.30px;top:758.80px;font-size:17.59px;line-height:21px;font-weight:400;color:#1f1a1d;letter-spacing:0.158px;-webkit-text-stroke:0.4px #1f1a1d;">Add Group</div>
<div class="t" id="t29" style="left:94.80px;top:839.30px;font-size:17px;line-height:20px;font-weight:700;color:#4e4349;letter-spacing:0.420px;">Sort</div>
<div class="t" id="t30" style="left:125.00px;top:897.00px;font-size:17.59px;line-height:21px;font-weight:400;color:#241f22;-webkit-text-stroke:0.15px #241f22;">ID</div>
<div class="t" id="t31" style="left:325.00px;top:897.00px;font-size:17.59px;line-height:21px;font-weight:400;color:#241f22;letter-spacing:0.372px;-webkit-text-stroke:0.15px #241f22;">numerically from...</div>
<div class="t" id="t32" style="left:630.60px;top:105.80px;font-size:21.5px;line-height:26px;font-weight:700;color:#1f1a1d;letter-spacing:0.070px;">Services</div>
<div class="t" id="t33" style="left:843.50px;top:108.70px;font-size:17.59px;line-height:21px;font-weight:400;color:#564a52;letter-spacing:0.079px;-webkit-text-stroke:0.15px #564a52;">Views</div>
<div class="t" id="t34" style="left:904.70px;top:109.00px;font-size:16.04px;line-height:19px;font-weight:400;color:#4e4349;-webkit-text-stroke:0.15px #4e4349;">2</div>
<div class="t" id="t35" style="left:969.00px;top:109.70px;font-size:17px;line-height:20px;font-weight:400;color:#564a52;letter-spacing:0.134px;-webkit-text-stroke:0.15px #564a52;">Rules</div>
<div class="t" id="t36" style="left:1061.00px;top:108.70px;font-size:17.59px;line-height:21px;font-weight:400;color:#564a52;letter-spacing:0.282px;-webkit-text-stroke:0.15px #564a52;">Settings</div>
<div class="t" id="t37" style="left:1400.50px;top:109.50px;font-size:17px;line-height:20px;font-weight:700;color:#1f1a1d;letter-spacing:0.076px;">Preview</div>
<div class="t" id="t38" style="left:633.20px;top:167.90px;font-size:17.59px;line-height:21px;font-weight:400;color:#1f1a1d;letter-spacing:0.436px;-webkit-text-stroke:0.4px #1f1a1d;">Add View</div>
<div class="t" id="t39" style="left:772.80px;top:168.00px;font-size:17.59px;line-height:21px;font-weight:400;color:#1f1a1d;letter-spacing:0.363px;-webkit-text-stroke:0.4px #1f1a1d;">Using live data</div>
<div class="t" id="t40" style="left:636.20px;top:235.60px;font-size:17.59px;line-height:21px;font-weight:400;color:#4e4349;letter-spacing:0.123px;-webkit-text-stroke:0.15px #4e4349;">Grid</div>
<div class="t" id="t41" style="left:614.60px;top:275.40px;font-size:29px;line-height:35px;font-weight:400;color:#333333;letter-spacing:-0.169px;-webkit-text-stroke:0.15px #333333;">Open Service Requests</div>
<div class="t" id="t42" style="left:625.80px;top:332.00px;font-size:15.7px;line-height:19px;font-weight:400;color:#1f1a1d;letter-spacing:-0.053px;-webkit-text-stroke:0.35px #1f1a1d;">Add/Remove Fields</div>
<div class="t" id="t43" style="left:633.80px;top:386.70px;font-size:15.7px;line-height:19px;font-weight:400;color:#9a9a9a;letter-spacing:0.020px;-webkit-text-stroke:0.15px #9a9a9a;">Search by keyword</div>
<div class="t" id="t44" style="left:822.50px;top:388.80px;font-size:15.5px;line-height:19px;font-weight:400;color:#2b2b2b;letter-spacing:-0.198px;-webkit-text-stroke:0.15px #2b2b2b;">Search</div>
<div class="t" id="t45" style="left:654.30px;top:431.70px;font-size:14.49px;line-height:17px;font-weight:400;color:#2b2b2b;letter-spacing:0.234px;-webkit-text-stroke:0.15px #2b2b2b;">Add filters</div>
<div class="t" id="t46" style="left:626.60px;top:483.30px;font-size:17px;line-height:20px;font-weight:700;color:#4e4349;">ID</div>
<div class="t" id="t47" style="left:670.80px;top:483.30px;font-size:17px;line-height:20px;font-weight:700;color:#4e4349;letter-spacing:0.407px;">Company Name</div>
<div class="t" id="t48" style="left:829.00px;top:483.30px;font-size:17px;line-height:20px;font-weight:700;color:#4e4349;letter-spacing:0.169px;">Billing Address</div>
<div class="t" id="t49" style="left:989.50px;top:483.30px;font-size:17px;line-height:20px;font-weight:700;color:#4e4349;letter-spacing:0.487px;">Description</div>
<div class="t" id="t50" style="left:1232.00px;top:483.30px;font-size:17px;line-height:20px;font-weight:700;color:#4e4349;letter-spacing:0.399px;">Service Date</div>
<div class="t" id="t51" style="left:628.00px;top:546.00px;font-size:17.59px;line-height:21px;font-weight:400;color:#4e4349;-webkit-text-stroke:0.15px #4e4349;">8</div>
<div class="t" id="t52" style="left:669.80px;top:546.00px;font-size:17.59px;line-height:21px;font-weight:400;color:#4e4349;letter-spacing:0.170px;-webkit-text-stroke:0.15px #4e4349;">Helpers United</div>
<div class="t" id="t53" style="left:829.60px;top:546.00px;font-size:17.59px;line-height:21px;font-weight:400;color:#4e4349;letter-spacing:-0.140px;-webkit-text-stroke:0.15px #4e4349;">11 Stanford</div>
<div class="t" id="t54" style="left:830.60px;top:571.70px;font-size:17.59px;line-height:21px;font-weight:400;color:#4e4349;letter-spacing:-0.083px;-webkit-text-stroke:0.15px #4e4349;">Street</div>
<div class="t" id="t55" style="left:829.60px;top:597.40px;font-size:17.59px;line-height:21px;font-weight:400;color:#4e4349;letter-spacing:-0.149px;-webkit-text-stroke:0.15px #4e4349;">New York, NY</div>
<div class="t" id="t56" style="left:829.60px;top:623.10px;font-size:17.59px;line-height:21px;font-weight:400;color:#4e4349;letter-spacing:-0.351px;-webkit-text-stroke:0.15px #4e4349;">10001</div>
<div class="t" id="t57" style="left:989.50px;top:546.00px;font-size:17.59px;line-height:21px;font-weight:400;color:#4e4349;letter-spacing:0.239px;-webkit-text-stroke:0.15px #4e4349;">Need to set-up new</div>
<div class="t" id="t58" style="left:989.50px;top:571.70px;font-size:17.59px;line-height:21px;font-weight:400;color:#4e4349;letter-spacing:0.178px;-webkit-text-stroke:0.15px #4e4349;">MacBook air to the</div>
<div class="t" id="t59" style="left:989.50px;top:597.40px;font-size:17.59px;line-height:21px;font-weight:400;color:#4e4349;letter-spacing:0.290px;-webkit-text-stroke:0.15px #4e4349;">network</div>
<div class="t" id="t60" style="left:1232.00px;top:546.00px;font-size:17.59px;line-height:21px;font-weight:400;color:#4e4349;letter-spacing:0.567px;-webkit-text-stroke:0.15px #4e4349;">09/05/2022</div>
<div class="t" id="t61" style="left:1391.60px;top:546.00px;font-size:17.59px;line-height:21px;font-weight:400;color:#2b2b2b;letter-spacing:-0.329px;-webkit-text-stroke:0.15px #2b2b2b;text-decoration:underline;text-decoration-thickness:1px;text-underline-offset:1.5px;">View</div>
<div class="t" id="t62" style="left:1363.80px;top:571.70px;font-size:17.59px;line-height:21px;font-weight:400;color:#2b2b2b;letter-spacing:0.060px;-webkit-text-stroke:0.15px #2b2b2b;text-decoration:underline;text-decoration-thickness:1px;text-underline-offset:1.5px;">Service</div>
<div class="t" id="t63" style="left:628.00px;top:687.20px;font-size:17.59px;line-height:21px;font-weight:400;color:#4e4349;-webkit-text-stroke:0.15px #4e4349;">9</div>
<div class="t" id="t64" style="left:670.30px;top:687.20px;font-size:17.59px;line-height:21px;font-weight:400;color:#4e4349;letter-spacing:-0.001px;-webkit-text-stroke:0.15px #4e4349;">The Customer</div>
<div class="t" id="t65" style="left:670.30px;top:712.90px;font-size:17.59px;line-height:21px;font-weight:400;color:#4e4349;-webkit-text-stroke:0.15px #4e4349;">Co</div>
<div class="t" id="t66" style="left:829.60px;top:687.20px;font-size:17.59px;line-height:21px;font-weight:400;color:#4e4349;letter-spacing:0.000px;-webkit-text-stroke:0.15px #4e4349;">123 Computer St</div>
<div class="t" id="t67" style="left:829.60px;top:712.90px;font-size:17.59px;line-height:21px;font-weight:400;color:#4e4349;letter-spacing:-0.149px;-webkit-text-stroke:0.15px #4e4349;">New York, NY</div>
<div class="t" id="t68" style="left:829.60px;top:738.60px;font-size:17.59px;line-height:21px;font-weight:400;color:#4e4349;letter-spacing:-0.101px;-webkit-text-stroke:0.15px #4e4349;">12345</div>
<div class="t" id="t69" style="left:989.50px;top:687.20px;font-size:17.59px;line-height:21px;font-weight:400;color:#4e4349;letter-spacing:-0.025px;-webkit-text-stroke:0.15px #4e4349;">I need some help</div>
<div class="t" id="t70" style="left:990.50px;top:712.90px;font-size:17.59px;line-height:21px;font-weight:400;color:#4e4349;letter-spacing:0.097px;-webkit-text-stroke:0.15px #4e4349;">connecting a wireless</div>
<div class="t" id="t71" style="left:989.50px;top:738.60px;font-size:17.59px;line-height:21px;font-weight:400;color:#4e4349;letter-spacing:0.202px;-webkit-text-stroke:0.15px #4e4349;">printer up to all of my</div>
<div class="t" id="t72" style="left:990.50px;top:764.30px;font-size:17.59px;line-height:21px;font-weight:400;color:#4e4349;letter-spacing:0.271px;-webkit-text-stroke:0.15px #4e4349;">computers.</div>
<div class="t" id="t73" style="left:1232.00px;top:687.20px;font-size:17.59px;line-height:21px;font-weight:400;color:#4e4349;letter-spacing:0.567px;-webkit-text-stroke:0.15px #4e4349;">08/06/2022</div>
<div class="t" id="t74" style="left:1391.60px;top:687.20px;font-size:17.59px;line-height:21px;font-weight:400;color:#2b2b2b;letter-spacing:-0.329px;-webkit-text-stroke:0.15px #2b2b2b;text-decoration:underline;text-decoration-thickness:1px;text-underline-offset:1.5px;">View</div>
<div class="t" id="t75" style="left:1363.80px;top:712.90px;font-size:17.59px;line-height:21px;font-weight:400;color:#2b2b2b;letter-spacing:0.060px;-webkit-text-stroke:0.15px #2b2b2b;text-decoration:underline;text-decoration-thickness:1px;text-underline-offset:1.5px;">Service</div>
<div class="t" id="t76" style="left:627.20px;top:828.20px;font-size:17.59px;line-height:21px;font-weight:400;color:#4e4349;-webkit-text-stroke:0.15px #4e4349;">10</div>
<div class="t" id="t77" style="left:670.30px;top:828.20px;font-size:17.59px;line-height:21px;font-weight:400;color:#4e4349;letter-spacing:-0.001px;-webkit-text-stroke:0.15px #4e4349;">The Customer</div>
<div class="t" id="t78" style="left:670.30px;top:853.90px;font-size:17.59px;line-height:21px;font-weight:400;color:#4e4349;-webkit-text-stroke:0.15px #4e4349;">Co</div>
<div class="t" id="t79" style="left:829.60px;top:828.20px;font-size:17.59px;line-height:21px;font-weight:400;color:#4e4349;letter-spacing:0.000px;-webkit-text-stroke:0.15px #4e4349;">123 Computer St</div>
<div class="t" id="t80" style="left:829.60px;top:853.90px;font-size:17.59px;line-height:21px;font-weight:400;color:#4e4349;letter-spacing:-0.149px;-webkit-text-stroke:0.15px #4e4349;">New York, NY</div>
<div class="t" id="t81" style="left:829.60px;top:879.60px;font-size:17.59px;line-height:21px;font-weight:400;color:#4e4349;letter-spacing:-0.101px;-webkit-text-stroke:0.15px #4e4349;">12345</div>
<div class="t" id="t82" style="left:989.50px;top:828.20px;font-size:17.59px;line-height:21px;font-weight:400;color:#4e4349;letter-spacing:0.043px;-webkit-text-stroke:0.15px #4e4349;">My son needs a new small</div>
<div class="t" id="t83" style="left:989.50px;top:853.90px;font-size:17.59px;line-height:21px;font-weight:400;color:#4e4349;letter-spacing:0.150px;-webkit-text-stroke:0.15px #4e4349;">laptop for school. Can you</div>
<div class="t" id="t84" style="left:989.50px;top:879.60px;font-size:17.59px;line-height:21px;font-weight:400;color:#4e4349;letter-spacing:-0.258px;-webkit-text-stroke:0.15px #4e4349;">help?</div>
<div class="t" id="t85" style="left:1232.00px;top:828.20px;font-size:17.59px;line-height:21px;font-weight:400;color:#4e4349;letter-spacing:0.356px;-webkit-text-stroke:0.15px #4e4349;">07/08/2022</div>
<div class="t" id="t86" style="left:1391.60px;top:828.20px;font-size:17.59px;line-height:21px;font-weight:400;color:#2b2b2b;letter-spacing:-0.329px;-webkit-text-stroke:0.15px #2b2b2b;text-decoration:underline;text-decoration-thickness:1px;text-underline-offset:1.5px;">View</div>
<div class="t" id="t87" style="left:1363.80px;top:853.90px;font-size:17.59px;line-height:21px;font-weight:400;color:#2b2b2b;letter-spacing:0.060px;-webkit-text-stroke:0.15px #2b2b2b;text-decoration:underline;text-decoration-thickness:1px;text-underline-offset:1.5px;">Service</div>
</div>
</body></html>
